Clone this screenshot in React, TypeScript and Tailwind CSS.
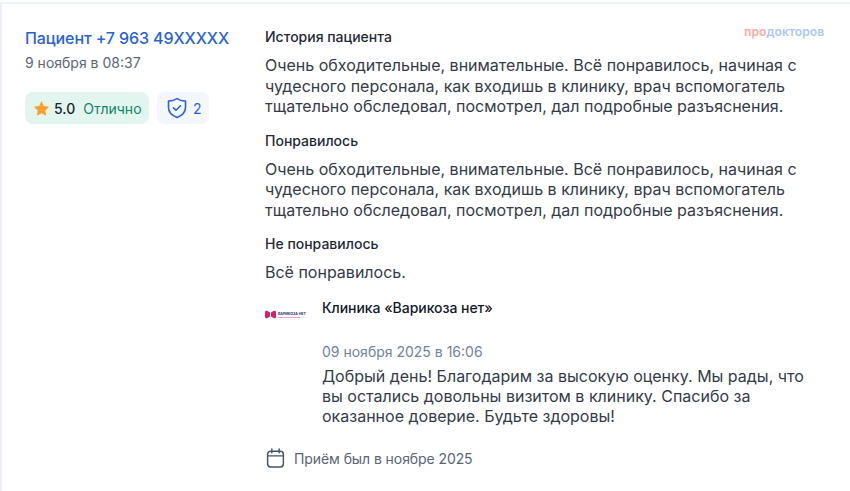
import React from "react";

const font = { fontFamily: "Inter, sans-serif" };

function Section({ title, children }: { title: string; children: React.ReactNode }) {
  return (
    <div>
      <div className="text-[14px] leading-[18px] font-medium text-[#1f2937]">{title}</div>
      <div className="mt-[9px] text-[16px] leading-[20.5px] text-[#333b47]">{children}</div>
    </div>
  );
}

const body = (
  <>
    Очень обходительные, внимательные. Всё понравилось, начиная с
    <br />
    чудесного персонала, как входишь в клинику, врач вспомогатель
    <br />
    тщательно обследовал, посмотрел, дал подробные разъяснения.
  </>
);

export default function App() {
  return (
    <div className="relative w-[850px] h-[491px] bg-white overflow-hidden" style={font}>
      <div className="h-[491px] mt-[2px] border-t-2 border-l-2 border-[#eef0f7] flex pl-[23px] pt-[24px]">
        <div className="w-[240px] shrink-0">
          <div className="text-[16px] leading-5 font-medium tracking-[-0.1px] text-[#2a62d4]">Пациент +7 963 49XXXXX</div>
          <div className="mt-[6px] text-[14px] leading-[18px] text-[#5d6675]">9 ноября в 08:37</div>
          <div className="mt-[20px] flex gap-2">
            <div className="h-8 w-[124px] rounded-lg bg-[#e2f6ef] flex items-center pl-[8px]">
              <svg width="17" height="17" viewBox="0 0 24 24" fill="#fb9f28">
                <path d="M12 1.500l3.300 6.900 7.400 1-5.400 5.300 1.400 7.600L12 18.600l-6.700 3.700 1.400-7.600L1.300 9.400l7.400-1z" />
              </svg>
              <span className="ml-[4px] text-[14px] font-medium text-[#1c2430]">5.0</span>
              <span className="ml-2 text-[14px] text-[#12846a]">Отлично</span>
            </div>
            <div className="h-8 w-[52px] rounded-lg bg-[#f4f7fe] flex items-center pl-[10px]">
              <svg width="20" height="24" viewBox="0 0 20 22" fill="none" stroke="#2a62d4" strokeWidth="1.600" strokeLinejoin="round" strokeLinecap="round">
                <path d="M10 1.500c2 1.600 4.800 2.400 8.500 2.500v6.500c0 4.800-3.400 8-8.500 10-5.100-2-8.500-5.200-8.500-10V4C5.200 3.900 8 3.100 10 1.500z" />
                <path d="M6.500 10.800l2.500 2.400 4.500-4.400" />
              </svg>
              <span className="ml-[6px] text-[14px] text-[#2a62d4]">2</span>
            </div>
          </div>
        </div>
        <div className="flex-1 flex flex-col">
          <div className="flex flex-col gap-[15px]">
            <Section title="История пациента">{body}</Section>
            <Section title="Понравилось">{body}</Section>
            <Section title="Не понравилось">Всё понравилось.</Section>
          </div>
          <div className="mt-[16px] flex">
            <div className="w-[57px] shrink-0 pt-[10px]">
              <div className="flex items-center h-[12px]">
                <svg width="11" height="9" viewBox="0 0 11 9" fill="#d81f6a" className="shrink-0">
                  <path d="M0 2c0-1 1-1.500 2-1.200L5 2.500v4L2 8.200C1 8.500 0 8 0 7zM11 2c0-1-1-1.500-2-1.200L6 2.500v4l3 1.700c1 .3 2-.2 2-1.200z" />
                </svg>
                <div className="ml-[2px] flex flex-col gap-[1px]">
                  <span className="text-[3.500px] leading-[4px] font-bold text-[#27306e] whitespace-nowrap">ВАРИКОЗА НЕТ</span>
                  <span className="h-[1px] w-[22px] bg-[#f0a6c4]"></span>
                </div>
              </div>
            </div>
            <div>
              <div className="text-[14px] leading-[18px] font-medium tracking-[-0.05px] text-[#111827]">Клиника «Варикоза нет»</div>
              <div className="mt-[25px] text-[14px] leading-5 text-[#6f849b]">09 ноября 2025 в 16:06</div>
              <div className="mt-[4px] text-[16px] leading-[20px] text-[#333b47]">
                Добрый день! Благодарим за высокую оценку. Мы рады, что
                <br />
                вы остались довольны визитом в клинику. Спасибо за
                <br />
                оказанное доверие. Будьте здоровы!
              </div>
            </div>
          </div>
          <div className="mt-[22px] ml-[1px] flex items-center">
            <svg width="19" height="21" viewBox="0 0 18 20" fill="none" stroke="#475569" strokeWidth="1.400" strokeLinecap="round">
              <rect x="1.500" y="3" width="15" height="15" rx="3" />
              <path d="M1.500 7.500h15M5.500 1v3.500M12.500 1v3.500" />
            </svg>
            <span className="ml-[9px] text-[14px] tracking-[-0.08px] text-[#5a6575]">Приём был в ноябре 2025</span>
          </div>
        </div>
        <div className="absolute top-[24px] left-[744px] text-[12.250px] font-semibold leading-4">
          <span className="text-[#ffaaa5]">про</span>
          <span className="text-[#abc8f5]">докторов</span>
        </div>
      </div>
    </div>
  );
}
